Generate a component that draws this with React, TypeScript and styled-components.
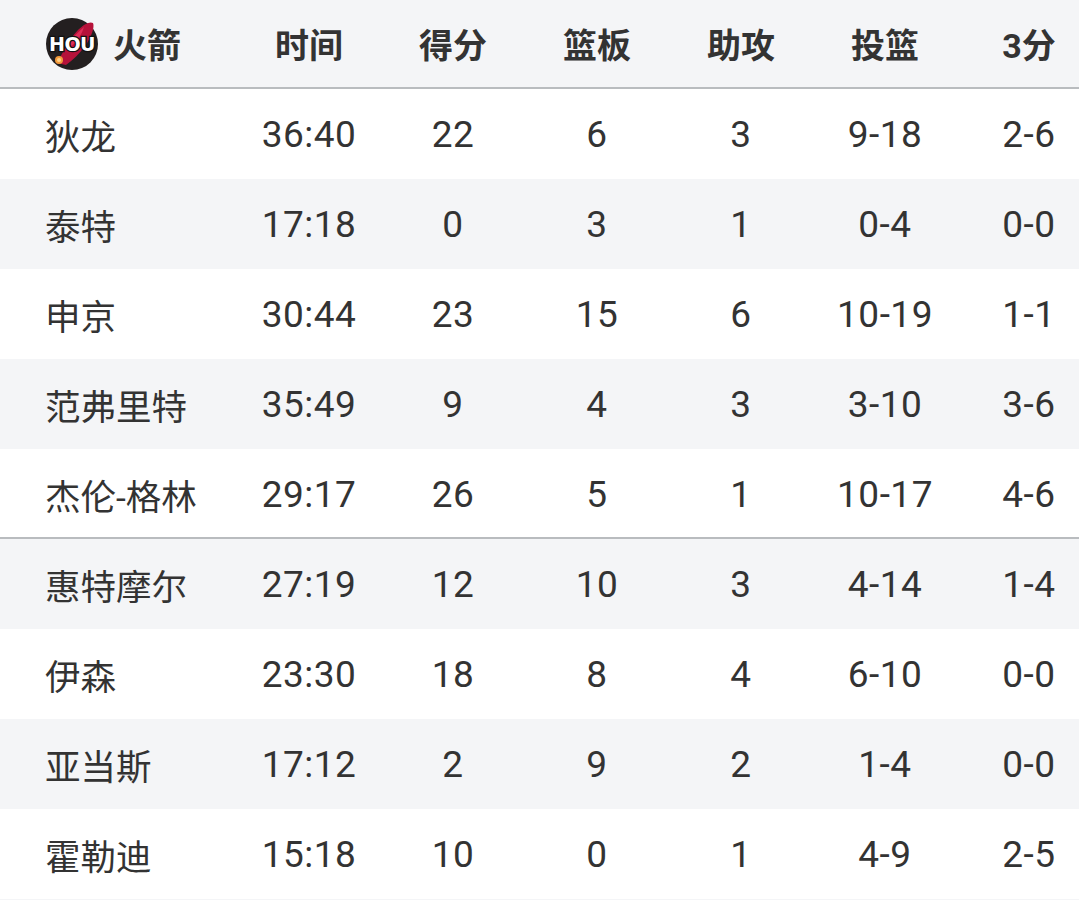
import React from "react";
import styled, { createGlobalStyle } from "styled-components";

const GlobalStyle = createGlobalStyle`
  html, body {
    margin: 0;
    padding: 0;
    background: #ffffff;
    overflow-x: hidden;
  }
  body {
    font-family: Roboto, "Noto Sans CJK SC", "Noto Sans", sans-serif;
    color: #333333;
  }
`;

type Player = {
  name: string;
  min: string;
  pts: number;
  reb: number;
  ast: number;
  fg: string;
  tp: string;
};

const players: Player[] = [
  { name: "狄龙", min: "36:40", pts: 22, reb: 6, ast: 3, fg: "9-18", tp: "2-6" },
  { name: "泰特", min: "17:18", pts: 0, reb: 3, ast: 1, fg: "0-4", tp: "0-0" },
  { name: "申京", min: "30:44", pts: 23, reb: 15, ast: 6, fg: "10-19", tp: "1-1" },
  { name: "范弗里特", min: "35:49", pts: 9, reb: 4, ast: 3, fg: "3-10", tp: "3-6" },
  { name: "杰伦-格林", min: "29:17", pts: 26, reb: 5, ast: 1, fg: "10-17", tp: "4-6" },
  { name: "惠特摩尔", min: "27:19", pts: 12, reb: 10, ast: 3, fg: "4-14", tp: "1-4" },
  { name: "伊森", min: "23:30", pts: 18, reb: 8, ast: 4, fg: "6-10", tp: "0-0" },
  { name: "亚当斯", min: "17:12", pts: 2, reb: 9, ast: 2, fg: "1-4", tp: "0-0" },
  { name: "霍勒迪", min: "15:18", pts: 10, reb: 0, ast: 1, fg: "4-9", tp: "2-5" },
];

const columns = ["时间", "得分", "篮板", "助攻", "投篮", "3分"];

// 7 columns; the last one runs past the right edge like the screenshot
const Table = styled.div`
  width: 1101px;
  padding-bottom: 4px;
  background: #f4f5f7;
`;

const HeaderRow = styled.div`
  display: grid;
  grid-template-columns: 237px repeat(6, 144px);
  align-items: center;
  height: 89px;
  box-sizing: border-box;
  background: #f4f5f7;
  border-bottom: 2px solid #b9bcbf;
`;

const Row = styled.div<{ $striped: boolean; $divider?: boolean }>`
  display: grid;
  grid-template-columns: 237px repeat(6, 144px);
  align-items: center;
  height: 90px;
  background: ${(p) => (p.$striped ? "#f4f5f7" : "#ffffff")};
  box-shadow: ${(p) => (p.$divider ? "inset 0 -2px 0 #b9bcbf" : "none")};
`;

const TeamCell = styled.div`
  display: flex;
  align-items: center;
  gap: 12px;
  padding-left: 43px;
  font-size: 34px;
  font-weight: 700;
  color: #333333;
`;

const HeadCell = styled.div`
  text-align: center;
  font-size: 34px;
  font-weight: 700;
  color: #333333;
`;

const NameCell = styled.div`
  padding-left: 45px;
  font-size: 35.5px;
  color: #333333;
  white-space: nowrap;
`;

const StatCell = styled.div`
  text-align: center;
  font-size: 37px;
  font-weight: 400;
  letter-spacing: 0.5px;
  color: #333333;
`;

const Logo = () => (
  <svg width="58" height="58" viewBox="0 0 58 58">
    <circle cx="29" cy="29" r="26" fill="#231f20" />
    <path
      d="M14 48 C20 38 25 25 35 15 C41 9 47 6 50 8 C52 12 48 23 42 31 C36 39 30 45 23 50 Z"
      fill="#b5123a"
    />
    <path d="M25 29 C29 23 35 17 41 12 C39 19 35 25 29 31 Z" fill="#de2d57" />
    <circle cx="16" cy="45" r="4" fill="#f39a3c" />
    <circle cx="16" cy="45" r="2" fill="#ffd28a" />
    <text
      x="29"
      y="36"
      textAnchor="middle"
      fontFamily="'DejaVu Sans', sans-serif"
      fontWeight="900"
      fontSize="19"
      fill="#ffffff"
      stroke="#111111"
      strokeWidth="2.6"
      paintOrder="stroke"
      letterSpacing="-0.5"
    >
      HOU
    </text>
  </svg>
);

export default function App() {
  return (
    <>
      <GlobalStyle />
      <Table>
        <HeaderRow>
          <TeamCell>
            <Logo />
            火箭
          </TeamCell>
          {columns.map((c) => (
            <HeadCell key={c}>{c}</HeadCell>
          ))}
        </HeaderRow>
        {players.map((p, i) => (
          <Row key={p.name} $striped={i % 2 === 1 || i === 5} $divider={i === 4}>
            <NameCell>{p.name}</NameCell>
            <StatCell>{p.min}</StatCell>
            <StatCell>{p.pts}</StatCell>
            <StatCell>{p.reb}</StatCell>
            <StatCell>{p.ast}</StatCell>
            <StatCell>{p.fg}</StatCell>
            <StatCell>{p.tp}</StatCell>
          </Row>
        ))}
      </Table>
    </>
  );
}
